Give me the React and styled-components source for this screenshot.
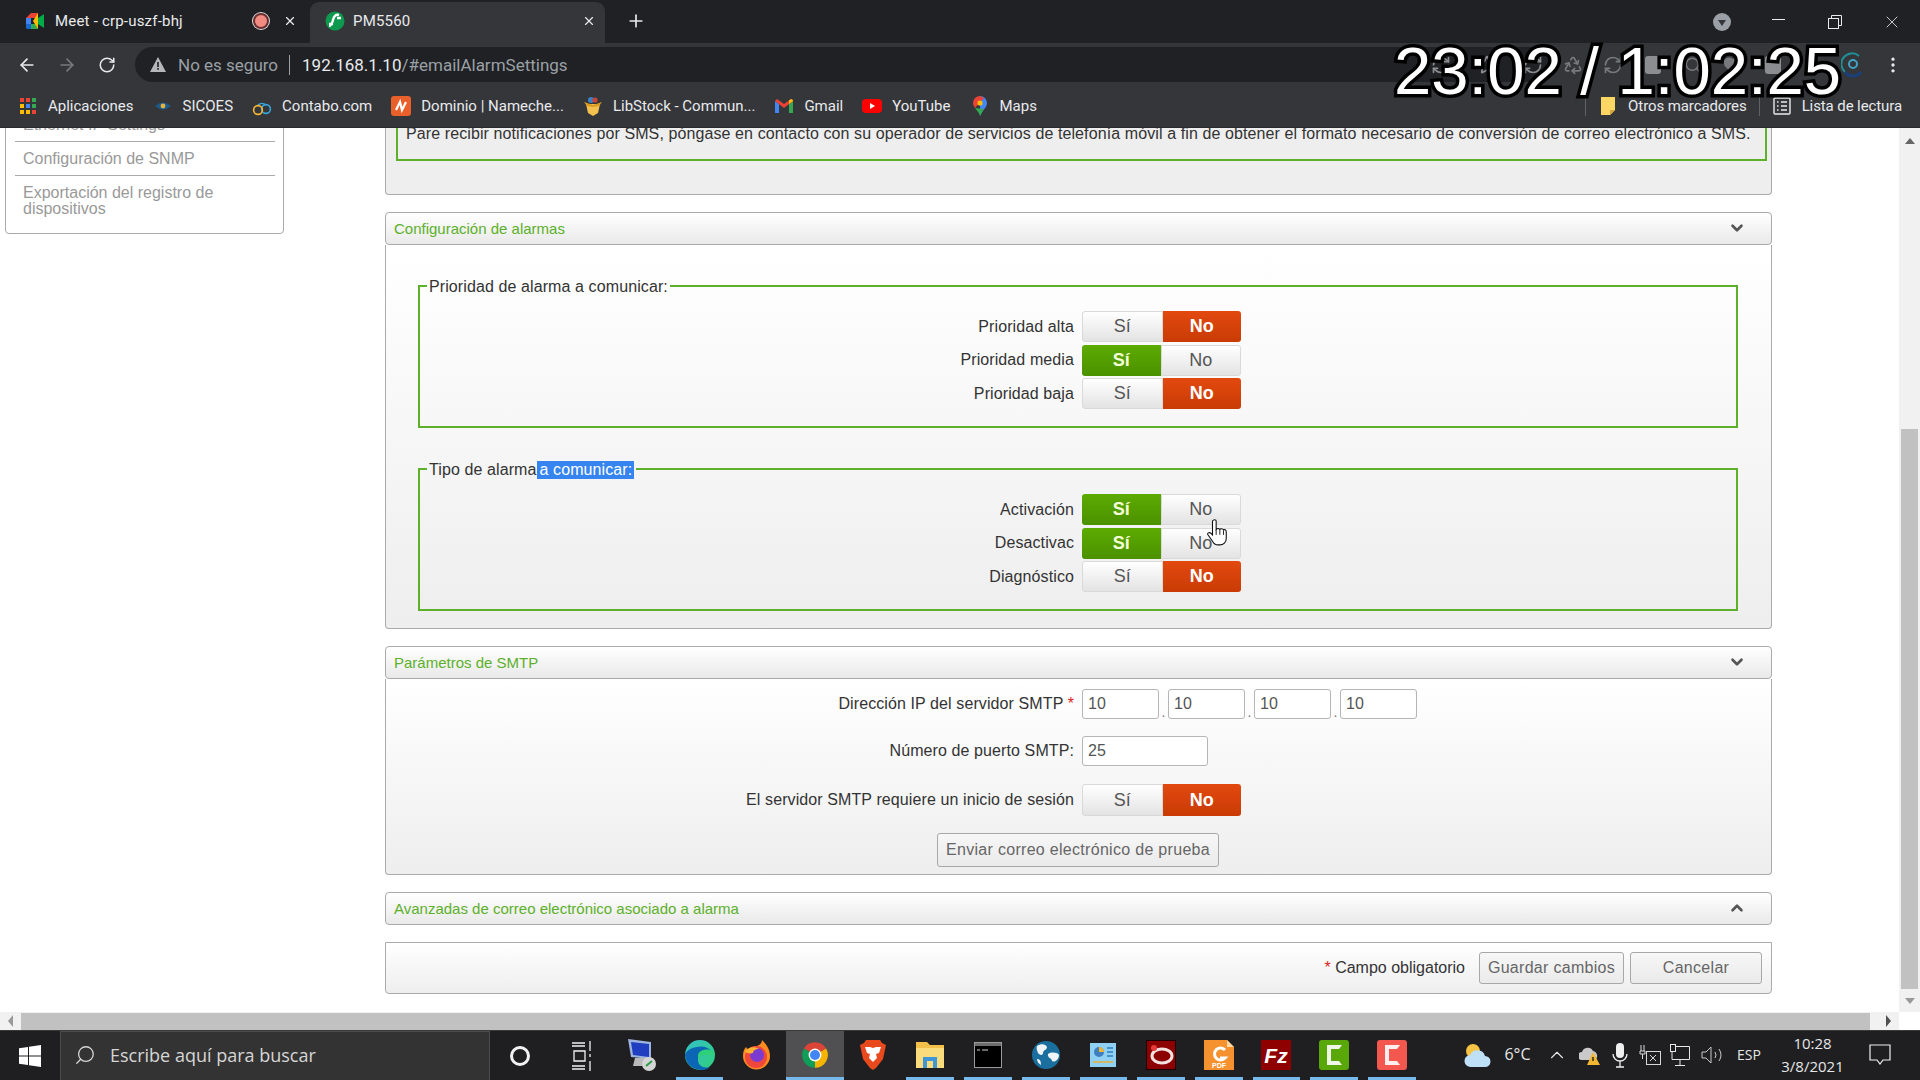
import React from "react";
import styled, { createGlobalStyle } from "styled-components";
import {
  ArrowLeft,
  ArrowRight,
  RotateCw,
  Plus,
  X,
  Star,
  Recycle,
  RefreshCw,
  Heart,
  Search,
  ChevronUp,
  MoreVertical,
} from "lucide-react";

const GlobalStyle = createGlobalStyle`
  html, body { margin: 0; padding: 0; height: 100%; overflow: hidden; background: #fff; }
  * { box-sizing: border-box; }
  body { font-family: "Liberation Sans", Arial, sans-serif; }
`;

const Screen = styled.div`
  position: relative;
  width: 1920px;
  height: 1080px;
  display: flex;
  flex-direction: column;
  overflow: hidden;
`;

/* ---- browser chrome ---- */

const TabStrip = styled.div`
  height: 43px;
  background: #202124;
  display: flex;
  align-items: flex-end;
  color: #e8eaed;
  font-family: Roboto, sans-serif;
  font-size: 15px;
  letter-spacing: 0.2px;
`;

const Tab = styled.div`
  height: 41px;
  width: ${(p) => p.$width}px;
  display: flex;
  align-items: center;
  padding: ${(p) => p.$padding};
  gap: ${(p) => p.$gap}px;
  border-radius: 9px 9px 0 0;
  background: ${(p) => (p.$active ? "#35363a" : "transparent")};
`;

const TabTitle = styled.span`
  flex: 1;
  white-space: nowrap;
`;

const RecDot = styled.span`
  width: 16px;
  height: 16px;
  border-radius: 50%;
  background: #f28b82;
  border: 2px solid #6a2f2f;
  box-shadow: 0 0 0 1px #d9d9d9;
  margin-right: 3px;
`;

const NewTab = styled.div`
  width: 62px;
  height: 41px;
  display: flex;
  align-items: center;
  justify-content: center;
  padding-bottom: 3px;
`;

const WindowControls = styled.div`
  margin-left: auto;
  height: 43px;
  display: flex;
  align-items: center;
`;

const WindowButton = styled.div`
  width: 57px;
  display: flex;
  justify-content: center;
`;

const ProfileDot = styled.div`
  width: 18px;
  height: 18px;
  border-radius: 50%;
  background: #9aa0a6;
  margin-right: 18px;
  display: flex;
  align-items: center;
  justify-content: center;
  &::after {
    content: "";
    border-left: 4px solid transparent;
    border-right: 4px solid transparent;
    border-top: 6px solid #35363a;
    margin-top: 2px;
  }
`;

const Toolbar = styled.div`
  height: 43px;
  background: #35363a;
  display: flex;
  align-items: center;
  padding-left: 7px;
  color: #e8eaed;
`;

const NavButton = styled.div`
  width: 40px;
  display: flex;
  justify-content: center;
  color: ${(p) => (p.$dim ? "#77797d" : "#e8eaed")};
`;

const AddressPill = styled.div`
  margin-left: 8px;
  width: 1418px;
  height: 35px;
  border-radius: 18px;
  background: #202124;
  display: flex;
  align-items: center;
  padding: 0 10px 0 15px;
  font-family: Roboto, sans-serif;
  font-size: 17px;
`;

const InsecureLabel = styled.span`
  color: #9aa0a6;
  margin-left: 12px;
  white-space: nowrap;
`;

const PillDivider = styled.span`
  width: 1px;
  height: 20px;
  background: #9aa0a6;
  margin: 0 12px 0 11px;
`;

const UrlHost = styled.span`
  color: #e8eaed;
`;

const UrlPath = styled.span`
  color: #9aa0a6;
`;

const PillIcons = styled.div`
  margin-left: auto;
  display: flex;
  align-items: center;
  gap: 26px;
  color: #8a8c90;
`;

const ExtSlot = styled.div`
  width: 40px;
  display: flex;
  justify-content: center;
  color: #77797d;
`;

const BookmarkBar = styled.div`
  height: 42px;
  background: #35363a;
  display: flex;
  align-items: center;
  padding: 0 18px 2px 18px;
  gap: 19px;
  color: #e8eaed;
  font-family: Roboto, sans-serif;
  font-size: 15px;
  box-shadow: inset 0 -1px 0 #2a2b2e;
`;

const Bookmark = styled.div`
  display: flex;
  align-items: center;
  gap: 10px;
  white-space: nowrap;
`;

const BookmarkIcon = styled.span`
  width: 20px;
  display: flex;
  justify-content: center;
`;

const BookmarkRight = styled.div`
  margin-left: auto;
  display: flex;
  align-items: center;
  gap: 12px;
  letter-spacing: -0.1px;
`;

const BarDivider = styled.span`
  width: 1px;
  height: 20px;
  background: #5f6368;
`;

/* ---- page ---- */

const Viewport = styled.div`
  height: 884px;
  display: flex;
  background: #fff;
  overflow: hidden;
  color: #333;
  font-size: 14px;
`;

const Sidebar = styled.nav`
  width: 279px;
  height: 127px;
  margin: -21px 0 0 5px;
  flex: none;
  border: 1px solid #aaa;
  border-radius: 0 0 4px 4px;
  padding: 0 8px 17px 9px;
  color: #999;
  font-size: 16px;
`;

const SideItem = styled.div`
  height: ${(p) => (p.$tall ? "auto" : "34px")};
  padding: 9px 8px 0;
  line-height: 16px;
  border-bottom: ${(p) => (p.$last ? "none" : "1px solid #aaa")};
`;

const Main = styled.main`
  width: 1387px;
  margin: -30px 0 0 101px;
  flex: none;
  display: flex;
  flex-direction: column;
  gap: 17px;
`;

const TopPanel = styled.section`
  border: 1px solid #aaa;
  border-top: none;
  border-radius: 0 0 4px 4px;
  padding: 0 4px 33px 10px;
  background: #eee;
`;

const Notice = styled.div`
  border: 2px solid #5cb02a;
  padding: 26px 8px 17px;
  line-height: 16px;
  font-size: 16px;
  letter-spacing: 0.1px;
  white-space: nowrap;
`;

const Section = styled.section`
  display: flex;
  flex-direction: column;
`;

const SectionHeader = styled.header`
  height: 33px;
  border: 1px solid #aaa;
  border-radius: 4px;
  background: linear-gradient(#fff, #e9e9e9);
  display: flex;
  align-items: center;
  justify-content: space-between;
  padding: 0 25px 1px 8px;
  color: #5cb02a;
  font-size: 15px;
`;

const Chevron = styled(ChevronUp)`
  color: #555;
  transform: ${(p) => (p.$down ? "rotate(180deg)" : "none")};
`;

const SectionBody = styled.div`
  border: 1px solid #aaa;
  border-top: none;
  border-radius: 0 0 4px 4px;
  background: linear-gradient(#fff, #eee);
  padding: ${(p) => p.$padding};
  display: flex;
  flex-direction: column;
  gap: ${(p) => p.$gap || "0"};
`;

const GreenFieldset = styled.fieldset`
  margin: 0;
  border: 2px solid #5cb02a;
  padding: 15px 7px 17px 7px;
  min-width: 0;
  display: flex;
  flex-direction: column;
  gap: 2.5px;
`;

const Legend = styled.legend`
  padding: 2px 2px 0;
  margin-left: 0;
  line-height: 18px;
  font-size: 16px;
  letter-spacing: 0.1px;
  color: #333;
`;

const Selected = styled.span`
  display: inline-block;
  background: #3584f0;
  color: #fff;
  padding: 0 2px 0 3px;
`;

const FormRow = styled.div`
  display: grid;
  grid-template-columns: 1fr 1fr;
  column-gap: 8px;
  align-items: center;
`;

const LoginRow = styled(FormRow)`
  margin-top: 1px;
`;

const RowLabel = styled.label`
  text-align: right;
  font-size: 16px;
  letter-spacing: 0.1px;
  white-space: nowrap;
`;

const Required = styled.span`
  color: #d9241c;
`;

const Toggle = styled.div`
  display: flex;
  width: 159px;
  height: ${(p) => p.$height || 31}px;
`;

const ToggleSide = styled.div`
  flex: 1;
  display: flex;
  align-items: center;
  justify-content: center;
  font-size: 18px;
  border-radius: ${(p) => (p.$left ? "3px 0 0 3px" : "0 3px 3px 0")};
  ${(p) =>
    p.$state === "yes"
      ? "background: linear-gradient(#5cab02, #4b9100); color: #f4ffd8; font-weight: bold;"
      : p.$state === "no"
      ? "background: linear-gradient(#e2490f, #c93b05); color: #fff; font-weight: bold;"
      : "background: linear-gradient(#fff, #e3e3e3); color: #555; border: 1px solid #d9d9d9;"}
`;

const InputGroup = styled.div`
  display: flex;
  align-items: flex-end;
  gap: 0;
`;

const TextField = styled.div`
  width: ${(p) => p.$width}px;
  height: 30px;
  border: 1px solid #b5b5b5;
  border-radius: 3px;
  background: #fff;
  padding-left: 5px;
  line-height: 28px;
  font-size: 16px;
  color: #555;
`;

const IpDot = styled.span`
  width: 9px;
  text-align: center;
  line-height: 14px;
  color: #777;
  font-size: 14px;
`;

const GrayButton = styled.button`
  width: ${(p) => p.$width}px;
  height: ${(p) => p.$height}px;
  border: 1px solid #a8a8a8;
  border-radius: 3px;
  background: linear-gradient(#f7f7f7, #eaeaea);
  color: #666;
  font-family: inherit;
  font-size: 16px;
  letter-spacing: 0.3px;
  padding: 0;
`;

const TestRow = styled.div`
  display: flex;
  justify-content: center;
`;

const FooterPanel = styled.section`
  height: 52px;
  border: 1px solid #aaa;
  border-radius: 0 0 4px 4px;
  background: linear-gradient(#fff, #eee);
  display: flex;
  align-items: center;
  justify-content: flex-end;
  padding-right: 9px;
  gap: 6px;
  font-size: 16px;
`;

const RequiredNote = styled.span`
  margin-right: 8px;
  white-space: nowrap;
`;

const VScroll = styled.aside`
  margin-left: auto;
  width: 21px;
  height: 884px;
  background: #f1f1f1;
  display: flex;
  flex-direction: column;
  align-items: center;
`;

const ScrollArrow = styled.div`
  height: ${(p) => p.$size}px;
  display: flex;
  align-items: center;
  justify-content: center;
  flex: none;
  width: ${(p) => (p.$horizontal ? "21px" : "auto")};
  margin-left: ${(p) => p.$offset || 0}px;
`;

const ArrowGlyph = styled.span`
  width: 0;
  height: 0;
  ${(p) =>
    p.$dir === "up"
      ? "border-left: 5px solid transparent; border-right: 5px solid transparent; border-bottom: 6px solid #666;"
      : p.$dir === "down"
      ? "border-left: 5px solid transparent; border-right: 5px solid transparent; border-top: 6px solid #999;"
      : p.$dir === "left"
      ? "border-top: 6px solid transparent; border-bottom: 6px solid transparent; border-right: 5px solid #999;"
      : "border-top: 6px solid transparent; border-bottom: 6px solid transparent; border-left: 5px solid #505050;"}
`;

const VThumb = styled.div`
  width: 17px;
  height: 560px;
  margin-top: 275px;
  background: #c1c1c1;
`;

const HScroll = styled.div`
  height: 18px;
  background: #f1f1f1;
  display: flex;
  align-items: center;
`;

const HThumb = styled.div`
  width: 1849px;
  height: 17px;
  background: #c1c1c1;
`;

const ScrollCorner = styled.div`
  margin-left: auto;
  width: 21px;
  height: 18px;
  background: #fff;
`;

/* ---- taskbar ---- */

const Taskbar = styled.footer`
  height: 50px;
  background: #1f1f22;
  border-top: 1px solid #3a3a3c;
  display: flex;
  align-items: center;
  color: #e6e6e6;
  font-family: "Open Sans", sans-serif;
`;

const StartButton = styled.div`
  width: 60px;
  display: flex;
  justify-content: center;
`;

const SearchBox = styled.div`
  width: 430px;
  height: 49px;
  background: #333;
  border: 1px solid #4b4b4b;
  border-bottom: none;
  display: flex;
  align-items: center;
  gap: 14px;
  padding: 0 0 2px 13px;
  font-size: 18px;
  color: #d6d6d6;
`;

const MirroredSearch = styled(Search)`
  transform: scaleX(-1);
`;

const ShellButton = styled.div`
  width: ${(p) => p.$width}px;
  display: flex;
  justify-content: center;
`;

const CortanaRing = styled.span`
  width: 20px;
  height: 20px;
  border: 3px solid #f2f2f2;
  border-radius: 50%;
`;

const AppSlot = styled.div`
  position: relative;
  width: 57.7px;
  height: 49px;
  padding-bottom: 2px;
  display: flex;
  align-items: center;
  justify-content: center;
  background: ${(p) => (p.$current ? "#505052" : "transparent")};
  &::after {
    content: "";
    display: ${(p) => (p.$open ? "block" : "none")};
    position: absolute;
    bottom: 0;
    left: ${(p) => (p.$current ? "0" : "5px")};
    right: ${(p) => (p.$current ? "0" : "5px")};
    height: 3px;
    background: #76b9ed;
  }
`;

const Tray = styled.div`
  margin-left: auto;
  padding: 0 15px 2px 0;
  display: flex;
  align-items: center;
`;

const TrayItem = styled.div`
  width: ${(p) => p.$width}px;
  display: flex;
  flex-direction: column;
  align-items: center;
  justify-content: center;
  font-size: ${(p) => p.$font || 14}px;
  line-height: 23px;
  white-space: nowrap;
`;

/* ---- overlays ---- */

const TimeStamp = styled.div`
  position: absolute;
  left: 1394px;
  top: 33px;
  font-size: 67px;
  line-height: 76px;
  color: #fff;
  white-space: nowrap;
  -webkit-text-stroke: 7px #000;
  paint-order: stroke fill;
  text-shadow: 2px 2px 0 #000;
`;

const HandCursor = styled.svg`
  position: absolute;
  left: 1207px;
  top: 519px;
`;

/* ---- drawings ---- */

const Meet = () => (
  <svg width="18" height="16" viewBox="0 0 18 16">
    <path d="M0 5 5 0h7v5H5v6H0z" fill="#ea4335" />
    <path d="M0 5h5v6H0z" fill="#4285f4" />
    <path d="M0 11h5v5H1.5A1.5 1.5 0 0 1 0 14.5z" fill="#1967d2" />
    <path d="M5 11h7v5H5z" fill="#34a853" />
    <path d="M12 0v16l-5-8z" fill="#fbbc04" />
    <path d="m12 5 6-4v14l-6-4z" fill="#00ac47" />
  </svg>
);

const SchneiderMark = () => (
  <svg width="20" height="20" viewBox="0 0 20 20">
    <circle cx="10" cy="10" r="9.5" fill="#0d9a4f" />
    <path d="M14 4c-3-1-5 1-6 5s-2 6-4 6M16 7h-4M8 13H4" fill="none" stroke="#fff" strokeWidth="2.4" />
  </svg>
);

const AppsGrid = () => (
  <svg width="16" height="16" viewBox="0 0 16 16">
    {["#ea4335", "#ea4335", "#34a853", "#fbbc04", "#4285f4", "#34a853", "#fbbc04", "#fbbc04", "#ea4335"].map((c, i) => (
      <rect key={i} x={(i % 3) * 6} y={Math.floor(i / 3) * 6} width="4" height="4" fill={c} />
    ))}
  </svg>
);

const SicoesEye = () => (
  <svg width="18" height="14" viewBox="0 0 18 14">
    <path d="M1 7q8-7 16 0-8 7-16 0z" fill="#1c5a8c" />
    <circle cx="9" cy="7" r="2.4" fill="#e8b23a" />
  </svg>
);

const ContaboLogo = () => (
  <svg width="20" height="20" viewBox="0 0 20 20" fill="none" strokeWidth="1.6">
    <path d="M6 9a6 6 0 0 1 8 0" stroke="#35a4dc" />
    <circle cx="14" cy="13" r="4.4" stroke="#35a4dc" />
    <circle cx="6" cy="14" r="4.4" stroke="#f2b632" />
  </svg>
);

const NamecheapLogo = () => (
  <svg width="20" height="20" viewBox="0 0 20 20">
    <rect width="20" height="20" rx="3" fill="#e9602a" />
    <path d="M5 14 9 6l2 8 4-8" fill="none" stroke="#fff" strokeWidth="2.2" />
  </svg>
);

const LibStockBox = () => (
  <svg width="20" height="20" viewBox="0 0 20 20">
    <path d="M3 8h14l-2 9-5 3-5-3z" fill="#f2c14e" />
    <path d="M1 6l9 3 9-3-3 4-6 1-6-1z" fill="#d99b21" />
    <circle cx="8" cy="4" r="3" fill="#3b82c4" />
    <circle cx="12" cy="4" r="2.6" fill="#c8453b" />
  </svg>
);

const GmailLogo = () => (
  <svg width="18" height="14" viewBox="0 0 18 14">
    <path d="M0 2v12h4V5z" fill="#4285f4" />
    <path d="M18 2v12h-4V5z" fill="#34a853" />
    <path d="M0 2 9 9l9-7-2-2-7 5-7-5z" fill="#ea4335" />
    <path d="M14 5l4-3V1l-2-1-2 1.500z" fill="#fbbc04" />
  </svg>
);

const YouTubeLogo = () => (
  <svg width="20" height="14" viewBox="0 0 20 14">
    <rect width="20" height="14" rx="4" fill="#f00" />
    <path d="m8 4 5 3-5 3z" fill="#fff" />
  </svg>
);

const MapsPin = () => (
  <svg width="14" height="20" viewBox="0 0 14 20">
    <path d="M7 0a7 7 0 0 1 7 7c0 5-5 7-7 13z" fill="#4285f4" />
    <path d="M7 0a7 7 0 0 0-7 7c0 2 1 3 2 5L11 2z" fill="#ea4335" />
    <path d="M2 12c2 3 4 4 5 8l4-7z" fill="#34a853" />
    <circle cx="7" cy="7" r="2.6" fill="#fbbc04" />
  </svg>
);

const FolderNote = () => (
  <svg width="16" height="20" viewBox="0 0 16 20">
    <path d="M1 1h14v13l-5 5H1z" fill="#fdd663" />
    <path d="M15 14h-5v5z" fill="#d8a93a" />
  </svg>
);

const ReadingList = () => (
  <svg width="18" height="18" viewBox="0 0 18 18" fill="none" stroke="#e8eaed" strokeWidth="1.4">
    <rect x="1" y="1" width="16" height="16" rx="1" />
    <path d="M4 5h1.500M8 5h6M4 9h1.500M8 9h6M4 13h1.500M8 13h6" />
  </svg>
);

const WarnTriangle = () => (
  <svg width="16" height="15" viewBox="0 0 16 15">
    <path d="M8 0 16 15H0z" fill="#b5b7ba" />
    <path d="M7.200 5h1.600v5H7.200zM7.200 11h1.600v1.800H7.200z" fill="#202124" />
  </svg>
);

const WindowsLogo = () => (
  <svg width="22" height="22" viewBox="0 0 22 22" fill="#fff">
    <path d="M0 3.200 9 2v8.500H0zM10 1.800 22 0v10.500H10zM0 11.500h9V20L0 18.800zM10 11.500h12V22l-12-1.800z" />
  </svg>
);

const TaskView = () => (
  <svg width="22" height="36" viewBox="0 0 22 36" fill="none" stroke="#f2f2f2" strokeWidth="1.300">
    <path d="M1 5h13M1 8h13M3 13h11v10H3zM1 28h13M1 31h13M19 3v10M19 16v3M19 23v10" />
  </svg>
);

const RdpIcon = () => (
  <svg width="30" height="34" viewBox="0 0 30 34">
    <path d="M1 1 24 4v17L4 19z" fill="#9cb4de" />
    <path d="M4 4 22 6v13L6 17z" fill="#1f3fc0" />
    <path d="M8 20h12l2 8H6z" fill="#b9b9b9" />
    <circle cx="22" cy="26" r="7" fill="#d5d5d5" />
    <path d="m19 28 6-5" stroke="#2e9c4a" strokeWidth="2" />
  </svg>
);

const EdgeIcon = () => (
  <svg width="30" height="30" viewBox="0 0 30 30">
    <defs>
      <linearGradient id="edgeA" x1="0" y1="0" x2="1" y2="1">
        <stop offset="0" stopColor="#35c1c8" />
        <stop offset="1" stopColor="#2fd07a" />
      </linearGradient>
    </defs>
    <circle cx="15" cy="15" r="15" fill="url(#edgeA)" />
    <path d="M0 15C1 25 9 30 17 30c3 0 6-1 8-3-7 2-12-2-12-7 0-3 3-5 7-5h10C26 8 18 5 12 7 5 8 1 11 0 15z" fill="#0b66b5" />
    <path d="M14 20c0-3 3-5 7-5h9c0-1-1-3-3-4-5-3-14-1-14 5 0 2 0 3 1 4z" fill="#2fd07a" />
  </svg>
);

const FirefoxIcon = () => (
  <svg width="30" height="30" viewBox="0 0 30 30">
    <path d="M20 0c3 3 8 8 8 16a13.500 13.500 0 0 1-27 0c0-4 1-7 3-9l2 3c2-3 7-4 9-4 3-1 5-3 5-6z" fill="#ff8a1f" />
    <circle cx="14" cy="17" r="11" fill="#f0473c" />
    <circle cx="15" cy="15" r="7" fill="#7b3bd0" />
    <path d="M3 12c2-5 10-6 14-3-4 0-6 2-6 4-3 1-6 0-8-1z" fill="#ffb02e" />
  </svg>
);

const ChromeIcon = () => (
  <svg width="28" height="28" viewBox="0 0 24 24">
    <path d="M12 12 2.470 6.500A11 11 0 0 1 21.530 6.500z" fill="#db4437" />
    <path d="M12 12 21.530 6.500A11 11 0 0 1 12 23z" fill="#f4b400" />
    <path d="M12 12 12 23A11 11 0 0 1 2.470 6.500z" fill="#0f9d58" />
    <circle cx="12" cy="12" r="5.500" fill="#fff" />
    <circle cx="12" cy="12" r="4.300" fill="#4285f4" />
  </svg>
);

const BraveIcon = () => (
  <svg width="26" height="30" viewBox="0 0 26 30">
    <path d="M6 0h14l2 3 4 2-3 14-7 9-3 2-3-2-7-9L0 5l4-2z" fill="#e8491d" />
    <path d="M5 7h5l3 1 3-1h5l-2 6-3 1 1 4-4 4-4-4 1-4-3-1z" fill="#fff" />
  </svg>
);

const ExplorerIcon = () => (
  <svg width="28" height="26" viewBox="0 0 28 26">
    <path d="M0 0h11l3 3h14v23H0z" fill="#f3c04a" />
    <path d="M0 6h28v20H0z" fill="#fbdc7d" />
    <path d="M7 26V15h14v11h-4v-7h-6v7z" fill="#3f96d6" />
  </svg>
);

const TerminalIcon = () => (
  <svg width="28" height="26" viewBox="0 0 28 26">
    <rect x="0.500" y="0.500" width="27" height="25" fill="#000" stroke="#9a9a9a" />
    <rect x="1" y="1" width="26" height="3" fill="#6d6d6d" />
    <path d="M3 8h3M8 8h6" stroke="#cfcfcf" strokeWidth="1.200" />
  </svg>
);

const GlobeIcon = () => (
  <svg width="28" height="28" viewBox="0 0 28 28">
    <circle cx="14" cy="14" r="14" fill="#1a6f9f" />
    <path d="M5 5c4-3 9-2 10 1 0 3-4 3-4 6s-4 2-5 0-2-5-1-7zM16 13c3-2 9-2 11 1 0 4-4 8-7 6 0-3-5-3-4-7zM5 18c3 0 4 2 4 6-2-1-4-3-4-6z" fill="#eef4f7" />
  </svg>
);

const CardIcon = () => (
  <svg width="26" height="24" viewBox="0 0 26 24">
    <rect width="26" height="24" fill="#8fd0f3" />
    <circle cx="9" cy="9" r="5" fill="#3f7fc0" />
    <path d="M9 9V4a5 5 0 0 1 5 5z" fill="#f2b632" />
    <path d="M17 5h6M17 9h6M17 13h6" stroke="#2f7fc0" strokeWidth="1.500" />
    <path d="M3 19h20" stroke="#e8b23a" strokeWidth="1.500" />
  </svg>
);

const RedRingIcon = () => (
  <svg width="30" height="30" viewBox="0 0 30 30">
    <rect x="0.500" y="0.500" width="29" height="29" fill="#8c0000" stroke="#1a0000" />
    <ellipse cx="16" cy="16" rx="10" ry="7" fill="none" stroke="#f0e0e0" strokeWidth="3" />
    <circle cx="8" cy="8" r="3" fill="#e53b3b" />
  </svg>
);

const PdfIcon = () => (
  <svg width="30" height="30" viewBox="0 0 30 30">
    <path d="M0 0h23l7 7v23H0z" fill="#f5922f" />
    <path d="M23 0v7h7z" fill="#ffd9a8" />
    <path d="M21 10a6 6 0 1 0 0 8h-5" fill="none" stroke="#fff" strokeWidth="3" />
    <text x="15" y="28" textAnchor="middle" fontSize="7" fontWeight="700" fill="#fff" fontFamily="Liberation Sans, sans-serif">PDF</text>
  </svg>
);

const FileZillaIcon = () => (
  <svg width="30" height="30" viewBox="0 0 30 30">
    <rect width="30" height="30" fill="#8f0000" />
    <text x="15" y="23" textAnchor="middle" fontSize="21" fontStyle="italic" fontWeight="700" fill="#fff" fontFamily="Liberation Sans, sans-serif">Fz</text>
  </svg>
);

const CamtasiaIcon = ({ color }) => (
  <svg width="30" height="30" viewBox="0 0 30 30">
    <rect width="30" height="30" rx="3" fill={color} />
    <path d="M23 5H8v20h15l-3-4h-8V9h8z" fill="#fff" opacity="0.9" />
  </svg>
);

const WeatherIcon = () => (
  <svg width="28" height="26" viewBox="0 0 28 26">
    <circle cx="10" cy="9" r="7" fill="#f6c445" />
    <path d="M8 25a6 6 0 0 1-1-12 8 8 0 0 1 15 1 5.500 5.500 0 0 1 0 11z" fill="#bfe0f7" />
  </svg>
);

const CloudWarn = () => (
  <svg width="22" height="22" viewBox="0 0 22 22">
    <path d="M3 16a4 4 0 0 1 0-8 6 6 0 0 1 11-1 5 5 0 0 1 2 9z" fill="#c9c9c9" />
    <path d="M14 8 21 21H8z" fill="#f2b632" />
    <path d="M14 13v4" stroke="#222" strokeWidth="1.400" />
  </svg>
);

const MicIcon = () => (
  <svg width="16" height="26" viewBox="0 0 16 26">
    <rect x="4" y="1" width="8" height="15" rx="4" fill="#efefef" />
    <path d="M1 12a7 7 0 0 0 14 0M8 19v6M4 25h8" fill="none" stroke="#efefef" strokeWidth="1.300" />
  </svg>
);

const BatteryIcon = () => (
  <svg width="22" height="22" viewBox="0 0 22 22" fill="none" stroke="#d8d8d8">
    <rect x="7.500" y="7.500" width="14" height="13" />
    <path d="M2 1v6M5 1v6M1 7h5v3H1zM3.500 10v5M11 11l6 6M17 11l-6 6" />
  </svg>
);

const NetworkIcon = () => (
  <svg width="22" height="24" viewBox="0 0 22 24" fill="none" stroke="#e8e8e8">
    <rect x="1.500" y="1.500" width="5" height="7" />
    <path d="M6.500 3.500h14v13H3v-8M11 17v5M6 22.500h10" />
  </svg>
);

const SpeakerIcon = () => (
  <svg width="22" height="20" viewBox="0 0 22 20" fill="none" stroke="#c8c8c8">
    <path d="M1 7h4l5-5v16l-5-5H1zM14 7q2 3 0 6M18 4q4 6 0 12" />
  </svg>
);

const NotifyIcon = () => (
  <svg width="22" height="22" viewBox="0 0 22 22" fill="none" stroke="#f0f0f0" strokeWidth="1.200">
    <path d="M1 1h20v15h-7l-3 4-3-4H1z" />
  </svg>
);

const Restore = () => (
  <svg width="14" height="14" viewBox="0 0 14 14" fill="none" stroke="#e8eaed">
    <rect x="0.500" y="3.500" width="10" height="10" />
    <path d="M3.500 3.500v-3h10v10h-3" />
  </svg>
);

const Minimize = () => (
  <svg width="14" height="14" viewBox="0 0 14 14" stroke="#e8eaed">
    <path d="M1 4.500h13" />
  </svg>
);

const ExtBlob = () => (
  <svg width="20" height="22" viewBox="0 0 20 22">
    <rect x="2" y="2" width="16" height="18" rx="3" fill="#8b8d90" />
  </svg>
);

const ExtRing = () => (
  <svg width="24" height="26" viewBox="0 0 24 26" fill="none">
    <path d="M4 20A10 10 0 0 1 18 4" stroke="#1f8f96" strokeWidth="2" />
    <path d="M4 20a10 10 0 0 0 16 0" stroke="#1b3f77" strokeWidth="3" />
    <circle cx="12" cy="12" r="4" stroke="#3fa2c4" strokeWidth="2" />
  </svg>
);

const SwitchControl = ({ on, height }) => (
  <Toggle $height={height}>
    <ToggleSide $left $state={on ? "yes" : "off"}>Sí</ToggleSide>
    <ToggleSide $state={on ? "off" : "no"}>No</ToggleSide>
  </Toggle>
);

const PriorityRow = ({ label, on }) => (
  <FormRow>
    <RowLabel>{label}</RowLabel>
    <SwitchControl on={on} />
  </FormRow>
);

const bookmarks = [
  [<AppsGrid />, "Aplicaciones"],
  [<SicoesEye />, "SICOES"],
  [<ContaboLogo />, "Contabo.com"],
  [<NamecheapLogo />, "Dominio | Nameche..."],
  [<LibStockBox />, "LibStock - Commun..."],
  [<GmailLogo />, "Gmail"],
  [<YouTubeLogo />, "YouTube"],
  [<MapsPin />, "Maps"],
];

const taskApps = [
  [<RdpIcon />, false],
  [<EdgeIcon />, true],
  [<FirefoxIcon />, false],
  [<ChromeIcon />, true, true],
  [<BraveIcon />, false],
  [<ExplorerIcon />, true],
  [<TerminalIcon />, true],
  [<GlobeIcon />, true],
  [<CardIcon />, true],
  [<RedRingIcon />, true],
  [<PdfIcon />, true],
  [<FileZillaIcon />, true],
  [<CamtasiaIcon color="#5aa70a" />, true],
  [<CamtasiaIcon color="#f4574d" />, true],
];

export default function App() {
  return (
    <Screen>
      <GlobalStyle />
      <TabStrip>
        <Tab $width={310} $gap={11} $padding="0 13px 3px 26px">
          <Meet />
          <TabTitle>Meet - crp-uszf-bhj</TabTitle>
          <RecDot />
          <X size={14} />
        </Tab>
        <Tab $width={295} $gap={8} $active $padding="0 9px 3px 15px">
          <SchneiderMark />
          <TabTitle>PM5560</TabTitle>
          <X size={14} />
        </Tab>
        <NewTab>
          <Plus size={20} />
        </NewTab>
        <WindowControls>
          <ProfileDot />
          <WindowButton><Minimize /></WindowButton>
          <WindowButton><Restore /></WindowButton>
          <WindowButton><X size={20} strokeWidth={1} /></WindowButton>
        </WindowControls>
      </TabStrip>

      <Toolbar>
        <NavButton><ArrowLeft size={20} /></NavButton>
        <NavButton $dim><ArrowRight size={20} /></NavButton>
        <NavButton><RotateCw size={18} /></NavButton>
        <AddressPill>
          <WarnTriangle />
          <InsecureLabel>No es seguro</InsecureLabel>
          <PillDivider />
          <UrlHost>192.168.1.10</UrlHost>
          <UrlPath>/#emailAlarmSettings</UrlPath>
          <PillIcons>
            <RefreshCw size={20} />
            <Star size={20} />
            <RefreshCw size={20} />
          </PillIcons>
        </AddressPill>
        <ExtSlot><Recycle size={20} /></ExtSlot>
        <ExtSlot><RefreshCw size={20} /></ExtSlot>
        <ExtSlot><ExtBlob /></ExtSlot>
        <ExtSlot><Search size={18} /></ExtSlot>
        <ExtSlot><Heart size={20} fill="#77797d" /></ExtSlot>
        <ExtSlot><ExtBlob /></ExtSlot>
        <ExtSlot />
        <ExtSlot><ExtRing /></ExtSlot>
        <NavButton><MoreVertical size={20} /></NavButton>
      </Toolbar>

      <BookmarkBar>
        {bookmarks.map(([icon, name]) => (
          <Bookmark key={name}>
            <BookmarkIcon>{icon}</BookmarkIcon>
            {name}
          </Bookmark>
        ))}
        <BookmarkRight>
          <BarDivider />
          <Bookmark><BookmarkIcon><FolderNote /></BookmarkIcon>Otros marcadores</Bookmark>
          <BarDivider />
          <Bookmark><BookmarkIcon><ReadingList /></BookmarkIcon>Lista de lectura</Bookmark>
        </BookmarkRight>
      </BookmarkBar>

      <Viewport>
        <Sidebar>
          <SideItem>Ethernet IP Settings</SideItem>
          <SideItem>Configuración de SNMP</SideItem>
          <SideItem $tall $last>Exportación del registro de dispositivos</SideItem>
        </Sidebar>

        <Main>
          <TopPanel>
            <Notice>
              Pare recibir notificaciones por SMS, póngase en contacto con su operador de servicios de telefonía móvil a fin de obtener el formato necesario de conversión de correo electrónico a SMS.
            </Notice>
          </TopPanel>

          <Section>
            <SectionHeader>
              Configuración de alarmas
              <Chevron $down size={18} strokeWidth={3.5} />
            </SectionHeader>
            <SectionBody $padding="31px 33px 17px 32px" $gap="31px">
              <GreenFieldset>
                <Legend>Prioridad de alarma a comunicar:</Legend>
                <PriorityRow label="Prioridad alta" />
                <PriorityRow label="Prioridad media" on />
                <PriorityRow label="Prioridad baja" />
              </GreenFieldset>
              <GreenFieldset>
                <Legend>Tipo de alarma<Selected>a comunicar:</Selected></Legend>
                <PriorityRow label="Activación" on />
                <PriorityRow label="Desactivac" on />
                <PriorityRow label="Diagnóstico" />
              </GreenFieldset>
            </SectionBody>
          </Section>

          <Section>
            <SectionHeader>
              Parámetros de SMTP
              <Chevron $down size={18} strokeWidth={3.5} />
            </SectionHeader>
            <SectionBody $padding="10px 1px 7px 0" $gap="17px">
              <FormRow>
                <RowLabel>Dirección IP del servidor SMTP <Required>*</Required></RowLabel>
                <InputGroup>
                  <TextField $width={77}>10</TextField>
                  <IpDot>.</IpDot>
                  <TextField $width={77}>10</TextField>
                  <IpDot>.</IpDot>
                  <TextField $width={77}>10</TextField>
                  <IpDot>.</IpDot>
                  <TextField $width={77}>10</TextField>
                </InputGroup>
              </FormRow>
              <FormRow>
                <RowLabel>Número de puerto SMTP:</RowLabel>
                <InputGroup>
                  <TextField $width={126}>25</TextField>
                </InputGroup>
              </FormRow>
              <LoginRow>
                <RowLabel>El servidor SMTP requiere un inicio de sesión</RowLabel>
                <SwitchControl height={32} />
              </LoginRow>
              <TestRow>
                <GrayButton $width={282} $height={34}>Enviar correo electrónico de prueba</GrayButton>
              </TestRow>
            </SectionBody>
          </Section>

          <SectionHeader>
            Avanzadas de correo electrónico asociado a alarma
            <Chevron size={18} strokeWidth={3.5} />
          </SectionHeader>

          <FooterPanel>
            <RequiredNote><Required>*</Required> Campo obligatorio</RequiredNote>
            <GrayButton $width={145} $height={32}>Guardar cambios</GrayButton>
            <GrayButton $width={132} $height={32}>Cancelar</GrayButton>
          </FooterPanel>
        </Main>

        <VScroll>
          <ScrollArrow $size={26}><ArrowGlyph $dir="up" /></ScrollArrow>
          <VThumb />
          <ScrollArrow $size={23}><ArrowGlyph $dir="down" /></ScrollArrow>
        </VScroll>
      </Viewport>

      <HScroll>
        <ScrollArrow $size={18} $horizontal><ArrowGlyph $dir="left" /></ScrollArrow>
        <HThumb />
        <ScrollArrow $size={18} $horizontal $offset={8}><ArrowGlyph $dir="right" /></ScrollArrow>
        <ScrollCorner />
      </HScroll>

      <Taskbar>
        <StartButton><WindowsLogo /></StartButton>
        <SearchBox>
          <MirroredSearch size={22} strokeWidth={1.4} />
          Escribe aquí para buscar
        </SearchBox>
        <ShellButton $width={60}><CortanaRing /></ShellButton>
        <ShellButton $width={63}><TaskView /></ShellButton>
        {taskApps.map(([icon, open, current], i) => (
          <AppSlot key={i} $open={open} $current={current}>{icon}</AppSlot>
        ))}
        <Tray>
          <TrayItem $width={40}><WeatherIcon /></TrayItem>
          <TrayItem $width={41} $font={16}>6°C</TrayItem>
          <TrayItem $width={37}><ChevronUp size={22} strokeWidth={1.2} /></TrayItem>
          <TrayItem $width={30}><CloudWarn /></TrayItem>
          <TrayItem $width={30}><MicIcon /></TrayItem>
          <TrayItem $width={30}><BatteryIcon /></TrayItem>
          <TrayItem $width={30}><NetworkIcon /></TrayItem>
          <TrayItem $width={33}><SpeakerIcon /></TrayItem>
          <TrayItem $width={42} $font={14}>ESP</TrayItem>
          <TrayItem $width={85} $font={15}>
            <span>10:28</span>
            <span>3/8/2021</span>
          </TrayItem>
          <TrayItem $width={50}><NotifyIcon /></TrayItem>
        </Tray>
      </Taskbar>

      <TimeStamp>23:02 / 1:02:25</TimeStamp>

      <HandCursor width="22" height="28" viewBox="0 0 24 30">
        <path d="M6 2c1-2 4-2 4 0v9c1-1 3-1 4 0 1-1 3-1 4 .5 1-.5 3 0 3 2V21c0 4-3 7-7 7h-2c-3 0-5-2-6-4l-5-7c-1-2 1-3 3-2l2 2z" fill="#fff" stroke="#111" strokeWidth="1.200" />
        <path d="M10 11v6M14 11v6M18 12v5" stroke="#111" />
      </HandCursor>
    </Screen>
  );
}
